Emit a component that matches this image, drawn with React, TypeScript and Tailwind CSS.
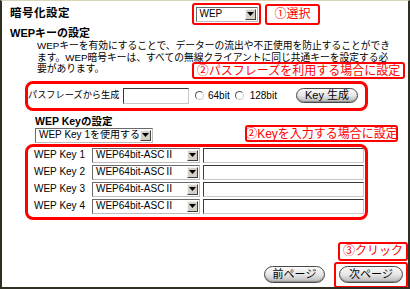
import React from 'react';

function Arrow() {
  return (
    <span className="flex h-[11px] w-[11px] shrink-0 items-center justify-center border border-t-[#f4f4f4] border-l-[#f4f4f4] border-r-[#404040] border-b-[#404040] bg-[#d4d0c8] mr-[1px]">
      <svg width="7" height="4" viewBox="0 0 7 4">
        <path d="M0 0h7L3.5 4z" fill="#000" />
      </svg>
    </span>
  );
}

function Select({ value, className }: { value: string; className: string }) {
  return (
    <div
      className={`flex items-center bg-white border border-t-[#6a6a6a] border-l-[#6a6a6a] border-r-[#bdbdbd] border-b-[#bdbdbd] ${className}`}
    >
      <span className="flex-1 overflow-hidden whitespace-nowrap pl-[3px] text-[10px] leading-none text-black">
        {value}
      </span>
      <Arrow />
    </div>
  );
}

function TextBox({ className }: { className: string }) {
  return (
    <div
      className={`bg-white border border-t-[#3a3a3a] border-l-[#3a3a3a] border-r-[#c8c8c8] border-b-[#c8c8c8] ${className}`}
    />
  );
}

function Radio() {
  return (
    <span className="inline-block h-[9px] w-[9px] shrink-0 rounded-full border border-t-[#555] border-l-[#555] border-r-[#ccc] border-b-[#ccc] bg-white" />
  );
}

function Pill({ label, className }: { label: string; className: string }) {
  return (
    <div
      className={`flex items-center justify-center rounded-full border border-[#4a4a4a] bg-gradient-to-b from-[#fafafa] via-[#e6e6e6] to-[#b8b8b8] shadow-[inset_0_-1px_1px_rgba(0,0,0,0.25)] text-[11px] leading-none text-black ${className}`}
    >
      {label}
    </div>
  );
}

function Callout({ text, className }: { text: string; className: string }) {
  return (
    <div
      className={`flex items-center justify-center rounded-[3px] border-2 border-[#ff0000] bg-white text-[#ff0000] whitespace-nowrap leading-none ${className}`}
    >
      {text}
    </div>
  );
}

const keys = ['WEP Key 1', 'WEP Key 2', 'WEP Key 3', 'WEP Key 4'];

export default function App() {
  return (
    <div className="relative h-[289px] w-[410px] overflow-hidden border-t border-l-2 border-r-2 border-b-2 border-t-[#d9d6b8] border-l-[#2e2e22] border-r-[#2e2e22] border-b-[#2e2e22] bg-white font-['Liberation_Sans','Noto_Sans_CJK_JP',sans-serif] text-black">
      {/* 暗号化設定 */}
      <div className="mt-[2px] flex h-[22px] items-center pl-[8px]">
        <span className="w-[182px] text-[11.5px] font-bold leading-none tracking-[0.5px]">暗号化設定</span>
        <div className="flex h-[22px] w-[69px] items-center justify-center rounded-[3px] border-2 border-[#ff0000]">
          <Select value="WEP" className="h-[15px] w-[62px]" />
        </div>
        <Callout text="①選択" className="ml-[4px] h-[21px] w-[55px] text-[12px]" />
      </div>

      <div className="mt-[2px] h-[13px] pl-[8px] text-[11px] font-bold leading-[13px]">WEPキーの設定</div>

      <p className="whitespace-nowrap pl-[35px] text-[9.75px] leading-[11.5px]">
        WEPキーを有効にすることで、データーの流出や不正使用を防止することができ
        <br />
        ます。WEP暗号キーは、すべての無線クライアントに同じ共通キーを設定する必
        <br />
        要があります。
      </p>

      <Callout
        text="②パスフレーズを利用する場合に設定"
        className="absolute left-[190px] top-[61px] h-[17px] w-[213px] text-[12px]"
      />

      {/* パスフレーズ */}
      <div className="ml-[23px] mt-[6px] flex h-[30px] w-[343px] items-center rounded-[8px] border-[3px] border-[#ff0000] text-[10px] leading-none">
        <span className="w-[95px] whitespace-nowrap text-[9.2px]">パスフレーズから生成</span>
        <TextBox className="h-[16px] w-[66px]" />
        <span className="ml-[6px] flex"><Radio /></span>
        <span className="ml-[4px]">64bit</span>
        <span className="ml-[5px] flex"><Radio /></span>
        <span className="ml-[6px]">128bit</span>
        <Pill label="Key 生成" className="ml-[19px] h-[15px] w-[62px]" />
      </div>

      <div className="mt-[4px] h-[12px] pl-[33px] text-[10.5px] font-bold leading-[12px]">WEP Keyの設定</div>
      <div className="mt-[1px] pl-[33px]">
        <Select value="WEP Key 1を使用する" className="h-[15px] w-[118px]" />
      </div>

      <Callout
        text="②Keyを入力する場合に設定"
        className="absolute left-[243px] top-[124px] h-[17px] w-[153px] text-[12px]"
      />

      {/* WEP Key */}
      <div className="ml-[23px] mt-[1px] w-[343px] rounded-[8px] border-[3px] border-[#ff0000] pb-[2px]">
        {keys.map((k) => (
          <div key={k} className="flex h-[17px] items-center pl-[6px]">
            <span className="w-[58px] whitespace-nowrap text-[10px] leading-none">{k}</span>
            <Select value="WEP64bit-ASCⅡ" className="h-[15px] w-[108px]" />
            <TextBox className="ml-[3px] h-[15px] w-[161px]" />
          </div>
        ))}
      </div>

      <div className="mt-[22px] flex justify-end">
        <Callout text="③クリック" className="h-[19px] w-[70px] text-[12px]" />
      </div>
      <div className="mt-[1px] flex items-center justify-end">
        <Pill label="前ページ" className="h-[17px] w-[61px]" />
        <div className="ml-[9px] flex h-[26px] w-[74px] items-center justify-center rounded-[3px] border-2 border-[#ff0000]">
          <Pill label="次ページ" className="h-[17px] w-[64px]" />
        </div>
      </div>
    </div>
  );
}
